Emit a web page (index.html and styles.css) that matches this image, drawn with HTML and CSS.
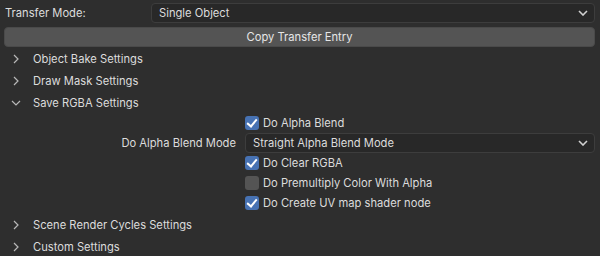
FILE: index.html
```html
<!DOCTYPE html>
<html lang="en">
<head>
  <meta charset="UTF-8" />
  <title>Transfer Panel</title>
  <link rel="stylesheet" href="styles.css">
</head>
<body>
  <div class="panel">
    <div class="row prop">
      <span class="prop-label">Transfer Mode:</span>
      <div class="dropdown wide">
        <span>Single Object</span>
        <svg class="caret" width="10" height="6" viewBox="0 0 10 6"><path d="M1 1 L5 5 L9 1" fill="none" stroke="#d0d0d0" stroke-width="1.6"/></svg>
      </div>
    </div>

    <div class="row action">
      <button class="btn">Copy Transfer Entry</button>
    </div>

    <div class="section">
      <svg class="chev" width="8" height="10" viewBox="0 0 8 10"><path d="M2 1 L6 5 L2 9" fill="none" stroke="#b8b8b8" stroke-width="1.2"/></svg>
      <span>Object Bake Settings</span>
    </div>
    <div class="section">
      <svg class="chev" width="8" height="10" viewBox="0 0 8 10"><path d="M2 1 L6 5 L2 9" fill="none" stroke="#b8b8b8" stroke-width="1.2"/></svg>
      <span>Draw Mask Settings</span>
    </div>
    <div class="section">
      <svg class="chev open" width="10" height="8" viewBox="0 0 10 8"><path d="M1 2 L5 6 L9 2" fill="none" stroke="#b8b8b8" stroke-width="1.2"/></svg>
      <span>Save RGBA Settings</span>
    </div>

    <div class="body">
      <div class="opt">
        <span class="side"></span>
        <label class="check"><span class="box on"></span>Do Alpha Blend</label>
      </div>
      <div class="opt">
        <span class="side">Do Alpha Blend Mode</span>
        <div class="dropdown">
          <span>Straight Alpha Blend Mode</span>
          <svg class="caret" width="10" height="6" viewBox="0 0 10 6"><path d="M1 1 L5 5 L9 1" fill="none" stroke="#d0d0d0" stroke-width="1.6"/></svg>
        </div>
      </div>
      <div class="opt">
        <span class="side"></span>
        <label class="check"><span class="box on"></span>Do Clear RGBA</label>
      </div>
      <div class="opt">
        <span class="side"></span>
        <label class="check"><span class="box"></span>Do Premultiply Color With Alpha</label>
      </div>
      <div class="opt">
        <span class="side"></span>
        <label class="check"><span class="box on"></span>Do Create UV map shader node</label>
      </div>
    </div>

    <div class="section">
      <svg class="chev" width="8" height="10" viewBox="0 0 8 10"><path d="M2 1 L6 5 L2 9" fill="none" stroke="#b8b8b8" stroke-width="1.2"/></svg>
      <span>Scene Render Cycles Settings</span>
    </div>
    <div class="section">
      <svg class="chev" width="8" height="10" viewBox="0 0 8 10"><path d="M2 1 L6 5 L2 9" fill="none" stroke="#b8b8b8" stroke-width="1.2"/></svg>
      <span>Custom Settings</span>
    </div>
  </div>
</body>
</html>
```

FILE: styles.css
```css
body {
  margin: 0;
  background: #2e2e2e;
  color: #dcdcdc;
  font-family: Inter, "Noto Sans", sans-serif;
  font-size: 11.2px;
}
.panel {
  padding: 3px 5px 0 4px;
}
.row {
  display: flex;
  align-items: center;
  height: 20px;
  margin-bottom: 4px;
}
.row.action {
  margin-bottom: 1px;
}
.prop-label {
  width: 146px;
  padding-left: 1px;
}
.dropdown {
  flex: 1;
  height: 18px;
  display: flex;
  align-items: center;
  justify-content: space-between;
  background: #282828;
  border: 1px solid #3d3d3d;
  border-radius: 4px;
  padding: 0 6px 0 7px;
}
.caret {
  display: block;
}
.btn {
  flex: 1;
  height: 20px;
  background: #545454;
  color: #e6e6e6;
  border: 1px solid #4a4a4a;
  border-radius: 4px;
  font-family: inherit;
  font-size: 11.2px;
  padding: 0;
}
.section {
  display: flex;
  align-items: center;
  height: 22px;
}
.chev {
  display: block;
  width: 29px;
  padding-left: 8px;
  padding-right: 13px;
  box-sizing: border-box;
}
.chev.open {
  padding-left: 7px;
  padding-right: 12px;
}
.body {
  margin-top: -1px;
  padding-bottom: 1px;
}
.opt {
  display: flex;
  align-items: center;
  height: 20px;
}
.side {
  width: 241px;
  text-align: right;
  padding-right: 9px;
  box-sizing: border-box;
}
.check {
  display: flex;
  align-items: center;
  gap: 4px;
}
.box {
  width: 14px;
  height: 14px;
  border-radius: 3px;
  background: #545454;
  position: relative;
}
.box.on {
  background: #4772b3;
}
.box.on::after {
  content: "";
  position: absolute;
  left: 4px;
  top: 1px;
  width: 4px;
  height: 8px;
  border: solid #fff;
  border-width: 0 2px 2px 0;
  transform: rotate(40deg);
}
```
